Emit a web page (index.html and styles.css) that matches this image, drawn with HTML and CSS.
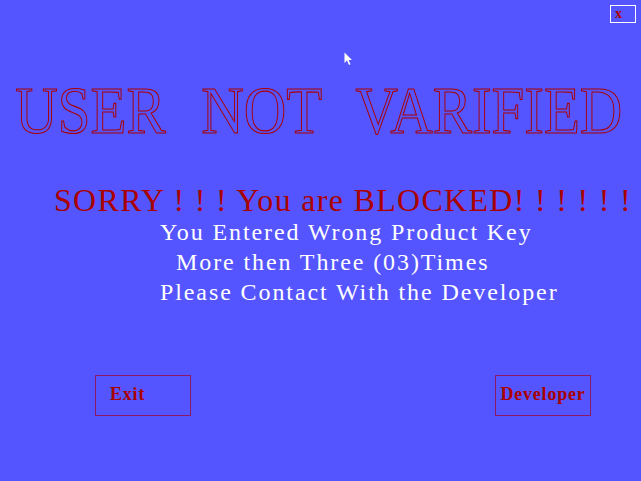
FILE: index.html
```html
<!DOCTYPE html>
<html>
<head>
<meta charset="utf-8">
<link rel="stylesheet" href="styles.css">
</head>
<body>
<div class="screen">
  <div class="topbar"><button class="close">x</button></div>
  <h1 class="title"><span class="title-text">USER NOT VARIFIED</span></h1>
  <p class="sorry">SORRY ! ! ! You are BLOCKED! ! ! ! ! !</p>
  <div class="msg">
    <p class="line">You Entered Wrong Product Key</p>
    <p class="line indent">More then Three (03)Times</p>
    <p class="line">Please Contact With the Developer</p>
  </div>
  <div class="actions">
    <button class="btn btn-exit">Exit</button>
    <button class="btn btn-dev">Developer</button>
  </div>
  <svg class="cursor" width="10" height="16" viewBox="0 0 10 16"><path d="M0.5 0.5 L0.5 11 L3 8.5 L5 13 L6.5 12.3 L4.6 8 L8 8 Z" fill="#fff"/></svg>
</div>
</body>
</html>
```
FILE: styles.css
```css
html, body {
  margin: 0;
  padding: 0;
  background: #5555ff;
}
.screen {
  position: relative;
  width: 641px;
  height: 481px;
  background: #5555ff;
  font-family: "Liberation Serif", "Times New Roman", serif;
  overflow: hidden;
}
.topbar {
  display: flex;
  justify-content: flex-end;
  padding: 5px 5px 0 0;
  height: 19px;
}
.close {
  width: 26px;
  height: 18px;
  border: 1px solid #ffffff;
  background: transparent;
  color: #aa0000;
  font-family: "Liberation Serif", serif;
  font-weight: bold;
  font-size: 14px;
  line-height: 14px;
  text-align: left;
  padding: 0 0 0 4px;
  margin: 0;
}
.title {
  display: flex;
  justify-content: center;
  margin: 52px 0 0 0;
  font-size: 68px;
  line-height: 68px;
  font-weight: normal;
  color: transparent;
  -webkit-text-stroke: 1.1px #aa0000;
}
.title-text {
  flex: none;
  white-space: nowrap;
  word-spacing: 24px;
  transform: translateX(-2px) scaleX(0.865);
}
.sorry {
  margin: 40px 0 0 54px;
  font-size: 32px;
  line-height: 32px;
  letter-spacing: 1.3px;
  color: #aa0000;
  white-space: nowrap;
}
.msg {
  margin: 1px 0 0 0;
  padding-left: 160px;
  color: #ffffff;
}
.line {
  margin: 0;
  font-size: 24px;
  line-height: 30px;
  letter-spacing: 1.9px;
  white-space: nowrap;
}
.indent {
  padding-left: 16px;
}
.actions {
  display: flex;
  justify-content: space-between;
  margin: 68px 0 0 95px;
  width: 496px;
}
.btn {
  width: 96px;
  height: 41px;
  border: 1px solid #8a1a66;
  background: transparent;
  color: #aa0000;
  font-family: "Liberation Serif", serif;
  font-weight: bold;
  font-size: 18px;
  letter-spacing: 0.8px;
  padding: 0 0 3px 0;
  margin: 0;
}
.btn-exit {
  text-align: left;
  padding-left: 14px;
}
.cursor {
  position: absolute;
  left: 344px;
  top: 52px;
}
```
